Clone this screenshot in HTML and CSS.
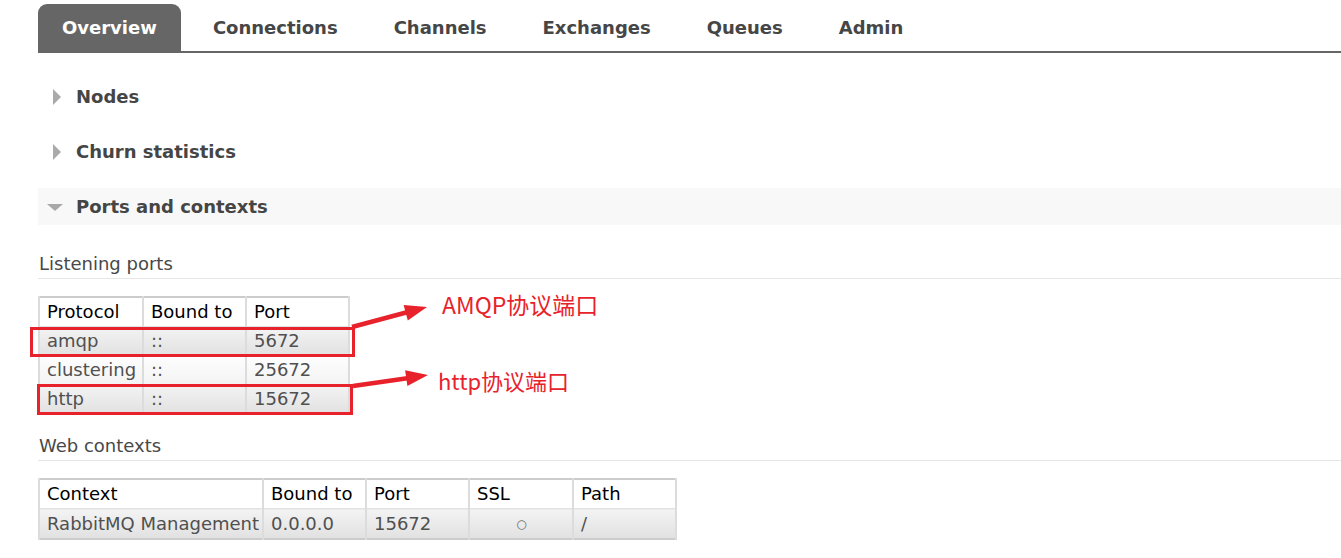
FILE: index.html
```html
<!DOCTYPE html>
<html lang="en">
<head>
<meta charset="utf-8">
<title>RabbitMQ Management - Overview</title>
<link rel="stylesheet" href="styles.css">
</head>
<body>
<div class="page">
  <nav class="tabs">
    <a class="tab active">Overview</a>
    <a class="tab">Connections</a>
    <a class="tab">Channels</a>
    <a class="tab">Exchanges</a>
    <a class="tab">Queues</a>
    <a class="tab">Admin</a>
  </nav>

  <div class="sections">
    <div class="section">
      <h2 class="section-head"><span class="tri-right"></span><span class="head-text">Nodes</span></h2>
    </div>
    <div class="section">
      <h2 class="section-head"><span class="tri-right"></span><span class="head-text">Churn statistics</span></h2>
    </div>
    <div class="section">
      <h2 class="section-head open"><span class="tri-down"></span><span class="head-text-open">Ports and contexts</span></h2>
      <div class="section-body">
        <h3 class="sub-title">Listening ports</h3>
        <table class="list ports">
          <colgroup><col class="c-proto"><col class="c-bound"><col class="c-port"></colgroup>
          <thead>
            <tr><th>Protocol</th><th>Bound to</th><th>Port</th></tr>
          </thead>
          <tbody>
            <tr class="alt1"><td>amqp</td><td>::</td><td>5672</td></tr>
            <tr class="alt2"><td>clustering</td><td>::</td><td>25672</td></tr>
            <tr class="alt1"><td>http</td><td>::</td><td>15672</td></tr>
          </tbody>
        </table>

        <h3 class="sub-title second">Web contexts</h3>
        <table class="list contexts">
          <colgroup><col class="c-ctx"><col class="c-bound"><col class="c-port"><col class="c-ssl"><col class="c-path"></colgroup>
          <thead>
            <tr><th>Context</th><th>Bound to</th><th>Port</th><th>SSL</th><th>Path</th></tr>
          </thead>
          <tbody>
            <tr class="alt1"><td>RabbitMQ Management</td><td>0.0.0.0</td><td>15672</td><td class="center"><span class="ssl-off">○</span></td><td>/</td></tr>
          </tbody>
        </table>
      </div>
    </div>
  </div>

  <svg class="annotations" width="1341" height="558" viewBox="0 0 1341 558" xmlns="http://www.w3.org/2000/svg">
    <rect x="31.5" y="328.5" width="322" height="27" fill="none" stroke="#e8222b" stroke-width="3"/>
    <rect x="38.5" y="385.5" width="313" height="28" fill="none" stroke="#e8222b" stroke-width="3"/>
    <line x1="352" y1="327" x2="408" y2="312" stroke="#e8222b" stroke-width="4.5"/>
    <polygon points="427,307 407.8,320.4 403.6,305" fill="#e8222b"/>
    <line x1="353" y1="386" x2="409" y2="378" stroke="#e8222b" stroke-width="4.5"/>
    <polygon points="428,375 407.4,386.1 405.1,370.3" fill="#e8222b"/>
  </svg>
  <div class="note note-amqp">AMQP协议端口</div>
  <div class="note note-http">http协议端口</div>
</div>
</body>
</html>
```

FILE: styles.css
```css
html, body {
  margin: 0;
  padding: 0;
  background: #ffffff;
}

.page {
  position: relative;
  width: 1341px;
  height: 558px;
  overflow: hidden;
  font-family: "DejaVu Sans", Verdana, sans-serif;
  color: #484848;
}

.tabs {
  display: flex;
  gap: 8px;
  margin: 0 0 0 38px;
  padding-top: 4px;
  border-bottom: 2px solid #666666;
}

.tab {
  display: block;
  height: 47px;
  line-height: 48px;
  padding: 0 24px;
  font-size: 18px;
  font-weight: bold;
  color: #464646;
  border-radius: 9px 9px 0 0;
}

.tab.active {
  background: #666666;
  color: #ffffff;
}

.sections {
  margin: 25px 0 0 38px;
}

.section + .section {
  margin-top: 18px;
}

.section-head {
  display: flex;
  align-items: center;
  height: 37px;
  margin: 0;
  font-size: 18px;
  font-weight: bold;
  color: #454545;
}

.section-head.open {
  background: #f8f8f8;
}

.tri-right {
  width: 0;
  height: 0;
  margin-left: 15px;
  border-left: 8px solid #aaaaaa;
  border-top: 8px solid transparent;
  border-bottom: 8px solid transparent;
}

.tri-down {
  width: 0;
  height: 0;
  margin-left: 9px;
  margin-top: 2px;
  border-top: 7px solid #a8a8a8;
  border-left: 8px solid transparent;
  border-right: 8px solid transparent;
}

.head-text {
  margin-left: 15px;
}

.head-text-open {
  margin-left: 13px;
}

.sub-title {
  margin: 28px 0 17px 0;
  padding: 0 0 3px 1px;
  line-height: 22px;
  font-size: 18px;
  font-weight: normal;
  color: #484848;
  border-bottom: 1px solid #e6e6e6;
}

.sub-title.second {
  margin-top: 20px;
}

table.list {
  border-collapse: collapse;
  table-layout: fixed;
  border: 2px solid #cccccc;
  font-size: 18px;
}

table.ports { width: 310px; }
table.contexts { width: 637px; }

col.c-proto { width: 104px; }
col.c-bound { width: 103px; }
col.c-port { width: 103px; }
col.c-ctx { width: 224px; }
col.c-ssl { width: 104px; }
col.c-path { width: 103px; }

table.list th,
table.list td {
  padding: 3px 6px 3px 7px;
  line-height: 22px;
  text-align: left;
  white-space: nowrap;
  border-left: 2px solid #dcdcdc;
  border-right: 2px solid #dcdcdc;
  border-top: 1px solid #e2e2e2;
  border-bottom: 1px solid #e2e2e2;
}

table.list th {
  font-weight: normal;
  color: #000000;
  background: #ffffff;
}

table.list td {
  color: #505050;
}

table.list tr.alt1 td {
  background: linear-gradient(#f3f3f3, #e1e1e1);
}

table.list tr.alt2 td {
  background: linear-gradient(#fdfdfd, #f3f3f3);
}

table.list td.center {
  text-align: center;
}

.ssl-off {
  font-size: 12px;
  color: #666666;
  vertical-align: 1px;
}

.annotations {
  position: absolute;
  left: 0;
  top: 0;
  pointer-events: none;
}

.note {
  position: absolute;
  font-family: "Noto Sans CJK SC", "Noto Sans", sans-serif;
  font-size: 22px;
  line-height: 30px;
  color: #e8222b;
  white-space: nowrap;
}

.note-amqp {
  left: 442px;
  top: 289px;
  font-size: 23px;
}

.note-http {
  left: 438px;
  top: 365px;
}
```
